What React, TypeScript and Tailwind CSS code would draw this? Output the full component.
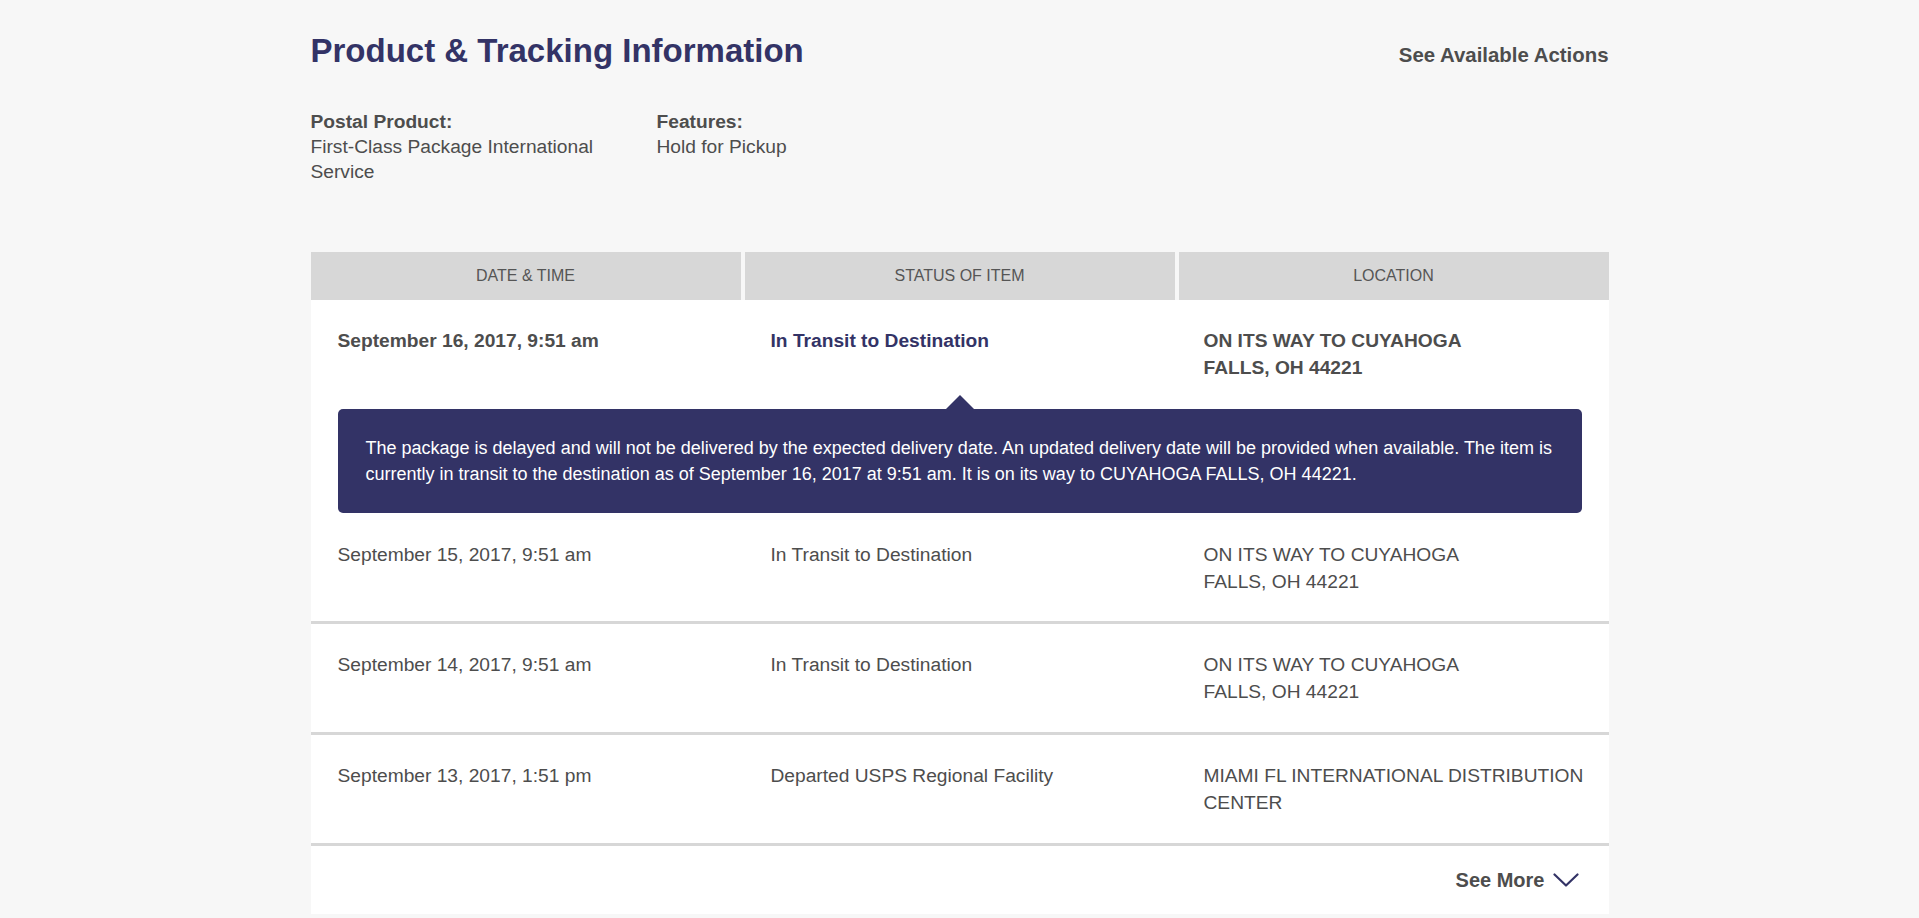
import React from "react";

type TrackRow = {
  date: string;
  status: string;
  location: string[];
};

const rows: TrackRow[] = [
  {
    date: "September 15, 2017, 9:51 am",
    status: "In Transit to Destination",
    location: ["ON ITS WAY TO CUYAHOGA", "FALLS, OH 44221"],
  },
  {
    date: "September 14, 2017, 9:51 am",
    status: "In Transit to Destination",
    location: ["ON ITS WAY TO CUYAHOGA", "FALLS, OH 44221"],
  },
  {
    date: "September 13, 2017, 1:51 pm",
    status: "Departed USPS Regional Facility",
    location: ["MIAMI FL INTERNATIONAL DISTRIBUTION CENTER"],
  },
];

function ChevronDown() {
  return (
    <svg width="26" height="14" viewBox="0 0 26 14" fill="none" aria-hidden="true">
      <path d="M1.5 1.5 L13 12.5 L24.5 1.5" stroke="#333366" strokeWidth="2.2" strokeLinecap="round" strokeLinejoin="round" />
    </svg>
  );
}

export default function App() {
  return (
    <div className="min-h-screen bg-[#f7f7f7] font-['Liberation_Sans',Arial,sans-serif] text-[#4d4d4d]">
      <div className="mx-auto w-[1298px] pt-[31px]">
        <div className="flex items-start justify-between">
          <h1 className="text-[33px] leading-[40px] font-bold text-[#333366]">Product &amp; Tracking Information</h1>
          <a href="#" className="mt-[12px] text-[20.4px] leading-[24px] font-bold text-[#4d4d4d]">
            See Available Actions
          </a>
        </div>

        <div className="mt-[38px] flex text-[19.2px] leading-[25px]">
          <div className="w-[346px]">
            <div className="font-bold">Postal Product:</div>
            <div className="max-w-[300px]">First-Class Package International Service</div>
          </div>
          <div>
            <div className="font-bold">Features:</div>
            <div>Hold for Pickup</div>
          </div>
        </div>

        <div className="mt-[68px] bg-white">
          <div className="grid grid-cols-3 gap-[4px] bg-[#f7f7f7]">
            {["Date & Time", "Status of Item", "Location"].map((h) => (
              <div
                key={h}
                className="flex h-[48px] items-center justify-center bg-[#d7d7d7] text-[16px] uppercase text-[#555555]"
              >
                {h}
              </div>
            ))}
          </div>

          {/* latest event, expanded */}
          <div className="grid grid-cols-[433px_433px_1fr] pl-[27px] pr-[20px] pt-[27px] text-[19.2px] leading-[27px] font-bold">
            <div>September 16, 2017, 9:51 am</div>
            <div className="text-[#333366]">In Transit to Destination</div>
            <div>
              ON ITS WAY TO CUYAHOGA
              <br />
              FALLS, OH 44221
            </div>
          </div>

          <div className="relative mx-[27px] mt-[28px] rounded-[5px] bg-[#333366] px-[28px] py-[26px] text-[18px] leading-[26px] text-white">
            <span className="absolute -top-[14px] left-[608px] h-0 w-0 border-x-[14px] border-b-[14px] border-x-transparent border-b-[#333366]" />
            The package is delayed and will not be delivered by the expected delivery date. An updated delivery date
            will be provided when available. The item is currently in transit to the destination as of September 16,
            2017 at 9:51 am. It is on its way to CUYAHOGA FALLS, OH 44221.
          </div>

          {rows.map((r, i) => (
            <div
              key={r.date}
              className={
                i === 0
                  ? "grid grid-cols-[433px_433px_1fr] border-b-[3px] border-[#d7d7d7] pl-[27px] pr-[20px] pt-[28px] pb-[26px] text-[19.2px] leading-[27px]"
                  : "grid grid-cols-[433px_433px_1fr] border-b-[3px] border-[#d7d7d7] pl-[27px] pr-[20px] py-[27px] text-[19.2px] leading-[27px]"
              }
            >
              <div>{r.date}</div>
              <div>{r.status}</div>
              <div className="max-w-[385px]">
                {r.location.map((l, j) => (
                  <React.Fragment key={l}>
                    {j > 0 ? <br /> : null}
                    {l}
                  </React.Fragment>
                ))}
              </div>
            </div>
          ))}

          <div className="flex h-[68px] items-center justify-end gap-[8px] pr-[30px]">
            <a href="#" className="text-[20px] font-bold text-[#4d4d4d]">
              See More
            </a>
            <ChevronDown />
          </div>
        </div>
      </div>
    </div>
  );
}
